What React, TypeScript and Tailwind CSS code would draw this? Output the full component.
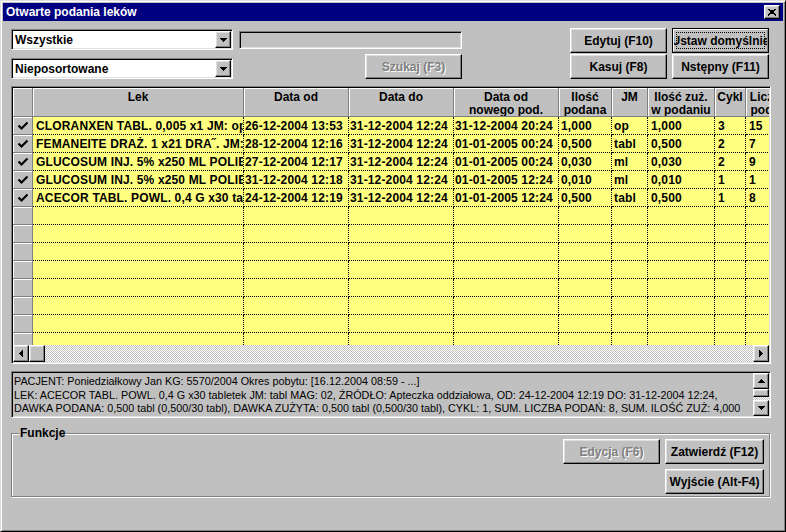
import React from "react";

const RAISED =
  "border border-t-white border-l-white border-r-black border-b-black shadow-[inset_-1px_-1px_0_#808080,inset_1px_1px_0_#dfdfdf] bg-[#c0c0c0]";
const SUNKEN =
  "border border-t-[#808080] border-l-[#808080] border-r-white border-b-white shadow-[inset_1px_1px_0_#000,inset_-1px_-1px_0_#dfdfdf]";
const CHECKER =
  "bg-[#c0c0c0] bg-[image:repeating-conic-gradient(#ffffff_0_25%,#c0c0c0_0_50%)] bg-[length:2px_2px]";

type Dir = "up" | "down" | "left" | "right";

function Arrow({ dir }: { dir: Dir }) {
  const vertical = dir === "up" || dir === "down";
  const pts =
    dir === "down"
      ? "0,0 7,0 3.5,4"
      : dir === "up"
      ? "0,4 7,4 3.5,0"
      : dir === "left"
      ? "4,0 4,7 0,3.5"
      : "0,0 0,7 4,3.5";
  return (
    <svg
      width={vertical ? 7 : 4}
      height={vertical ? 4 : 7}
      viewBox={vertical ? "0 0 7 4" : "0 0 4 7"}
      shapeRendering="crispEdges"
    >
      <polygon points={pts} fill="black" />
    </svg>
  );
}

function Button({
  label,
  className,
  disabled = false,
  isDefault = false,
}: {
  label: string;
  className: string;
  disabled?: boolean;
  isDefault?: boolean;
}) {
  const text = disabled
    ? "text-[#808080] [text-shadow:1px_1px_0_#fff]"
    : "text-black";
  if (isDefault) {
    return (
      <div className={`shrink-0 border border-black ${className}`}>
        <div className="relative h-full w-full border border-t-white border-l-white border-r-[#808080] border-b-[#808080] bg-[#c0c0c0] flex items-center justify-center overflow-hidden whitespace-nowrap">
          <span className={`text-[12px] font-bold ${text}`}>{label}</span>
          <div className="absolute inset-[2px] border border-dotted border-black pointer-events-none" />
        </div>
      </div>
    );
  }
  return (
    <div
      className={`shrink-0 ${RAISED} flex items-center justify-center overflow-hidden whitespace-nowrap ${className}`}
    >
      <span className={`text-[12px] font-bold ${text}`}>{label}</span>
    </div>
  );
}

function Combo({ value }: { value: string }) {
  return (
    <div className={`h-[21px] w-[222px] bg-white flex p-[1px] ${SUNKEN}`}>
      <div className="flex-1 flex items-center pl-[2px] text-[12px] font-bold">
        {value}
      </div>
      <div
        className={`w-[16px] h-full flex items-center justify-center ${RAISED}`}
      >
        <Arrow dir="down" />
      </div>
    </div>
  );
}

function Check() {
  return (
    <svg width="12" height="10" viewBox="0 0 12 10">
      <polyline
        points="1.5,4.5 4.5,7.5 10.5,1.5"
        fill="none"
        stroke="black"
        strokeWidth="2.2"
      />
    </svg>
  );
}

const COLS = [
  { w: "w-[211px]", pl: "pl-[3px]", h: ["Lek"] },
  { w: "w-[105px]", pl: "pl-[1px]", h: ["Data od"] },
  { w: "w-[105px]", pl: "pl-[1px]", h: ["Data do"] },
  { w: "w-[105px]", pl: "pl-[1px]", h: ["Data od", "nowego pod."] },
  { w: "w-[53px]", pl: "pl-[2px]", h: ["Ilość", "podana"] },
  { w: "w-[36px]", pl: "pl-[2px]", h: ["JM"] },
  { w: "w-[67px]", pl: "pl-[3px]", h: ["Ilość zuż.", "w podaniu"] },
  { w: "w-[31px]", pl: "pl-[3px]", h: ["Cykl"] },
  { w: "w-[46px]", pl: "pl-[3px]", h: ["Liczba", "podań"] },
];

const ROWS: string[][] = [
  ["CLORANXEN TABL. 0,005 x1 JM: op", "26-12-2004 13:53", "31-12-2004 12:24", "31-12-2004 20:24", "1,000", "op", "1,000", "3", "15"],
  ["FEMANEITE DRAŻ. 1 x21 DRA˝. JM: tabl", "28-12-2004 12:16", "31-12-2004 12:24", "01-01-2005 00:24", "0,500", "tabl", "0,500", "2", "7"],
  ["GLUCOSUM INJ. 5% x250 ML POLIETYLEN", "27-12-2004 12:17", "31-12-2004 12:24", "01-01-2005 00:24", "0,030", "ml", "0,030", "2", "9"],
  ["GLUCOSUM INJ. 5% x250 ML POLIETYLEN", "31-12-2004 12:18", "31-12-2004 12:24", "01-01-2005 12:24", "0,010", "ml", "0,010", "1", "1"],
  ["ACECOR TABL. POWL. 0,4 G x30 tabletek JM: tabl", "24-12-2004 12:19", "31-12-2004 12:24", "01-01-2005 12:24", "0,500", "tabl", "0,500", "1", "8"],
];

const EMPTY_ROWS = 8;

export default function App() {
  const allRows: (string[] | null)[] = [
    ...ROWS,
    ...Array.from({ length: EMPTY_ROWS }, () => null),
  ];
  return (
    <div className="w-[786px] h-[532px] bg-[#c0c0c0] border border-t-[#dfdfdf] border-l-[#dfdfdf] border-r-black border-b-black shadow-[inset_1px_1px_0_#fff,inset_-1px_-1px_0_#808080] p-[2px] flex flex-col overflow-hidden font-['Liberation_Sans',Arial,sans-serif] text-black select-none">
      {/* Title bar */}
      <div className="h-[18px] shrink-0 bg-[#000080] flex items-center justify-between pl-[3px] pr-[3px]">
        <span className="text-white text-[12px] font-bold leading-none">
          Otwarte podania leków
        </span>
        <div
          className={`w-[16px] h-[14px] flex items-center justify-center ${RAISED}`}
        >
          <svg width="8" height="7" viewBox="0 0 8 7" shapeRendering="crispEdges">
            <path d="M0 0 L8 7 M1 0 L8 6 M8 0 L0 7 M7 0 L0 6" stroke="black" strokeWidth="1" />
          </svg>
        </div>
      </div>

      {/* Body */}
      <div className="flex-1 flex flex-col pl-[8px] pr-[12px]">
        {/* Top controls */}
        <div className="mt-[7px] flex shrink-0">
          <div className="flex flex-col w-[222px] shrink-0">
            <div className="mt-[1px]">
              <Combo value="Wszystkie" />
            </div>
            <div className="mt-[8px]">
              <Combo value="Nieposortowane" />
            </div>
          </div>
          <div className="ml-[6px] w-[223px] shrink-0 flex flex-col items-end">
            <div className={`mt-[3px] h-[18px] w-full bg-[#c0c0c0] ${SUNKEN}`} />
            <div className="mt-[5px]">
              <Button label="Szukaj (F3)" className="w-[97px] h-[25px]" disabled />
            </div>
          </div>
          <div className="ml-auto mr-[2px] flex flex-col gap-[1px]">
            <div className="flex gap-[5px]">
              <Button label="Edytuj (F10)" className="w-[97px] h-[25px]" />
              <Button label="Ustaw domyślnie" className="w-[97px] h-[25px]" isDefault />
            </div>
            <div className="flex gap-[5px]">
              <Button label="Kasuj (F8)" className="w-[97px] h-[25px]" />
              <Button label="Nstępny (F11)" className="w-[97px] h-[25px]" />
            </div>
          </div>
        </div>

        {/* Grid */}
        <div
          className={`mt-[7px] h-[278px] w-full shrink-0 p-[1px] flex flex-col bg-[#c0c0c0] ${SUNKEN}`}
        >
          <div className="flex-1 overflow-hidden flex flex-col">
            {/* Header */}
            <div className="h-[29px] shrink-0 flex">
              <div className="w-[20px] shrink-0 h-full border-r border-b border-r-[#808080] border-b-[#808080] shadow-[inset_1px_1px_0_#fff] bg-[#c0c0c0]" />
              {COLS.map((c, i) => (
                <div
                  key={i}
                  className={`${c.w} shrink-0 h-full border-r border-b border-r-[#808080] border-b-[#808080] shadow-[inset_1px_1px_0_#fff] bg-[#c0c0c0] flex flex-col items-center pt-[3px] text-[12px] font-bold leading-[13px] whitespace-nowrap overflow-hidden`}
                >
                  {c.h.map((t, j) => (
                    <span key={j}>{t}</span>
                  ))}
                </div>
              ))}
            </div>
            {/* Rows */}
            <div className="h-[228px] shrink-0 overflow-hidden flex flex-col">
              {allRows.map((r, ri) => (
                <div key={ri} className="h-[18px] shrink-0 flex">
                  <div className="w-[20px] shrink-0 h-full border-r border-b border-r-[#808080] border-b-[#808080] shadow-[inset_1px_1px_0_#fff] bg-[#c0c0c0] flex items-center justify-center">
                    {r ? <Check /> : null}
                  </div>
                  {COLS.map((c, ci) => (
                    <div
                      key={ci}
                      className={`${c.w} ${c.pl} shrink-0 h-full bg-[#ffff80] border-r border-b border-dotted border-black overflow-hidden whitespace-nowrap flex items-center text-[12px] font-bold tracking-[0.15px]`}
                    >
                      {r ? r[ci] : ""}
                    </div>
                  ))}
                </div>
              ))}
            </div>
          </div>
          {/* Horizontal scrollbar */}
          <div className="h-[17px] shrink-0 flex">
            <div className={`w-[16px] h-full flex items-center justify-center ${RAISED}`}>
              <Arrow dir="left" />
            </div>
            <div className={`w-[16px] h-full ${RAISED}`} />
            <div className={`flex-1 h-full ${CHECKER}`} />
            <div className={`w-[16px] h-full flex items-center justify-center ${RAISED}`}>
              <Arrow dir="right" />
            </div>
          </div>
        </div>

        {/* Info text area */}
        <div
          className={`mt-[7px] h-[47px] w-full shrink-0 p-[1px] flex bg-[#c0c0c0] ${SUNKEN}`}
        >
          <div className="flex-1 pl-[1px] pt-[2px] text-[10.8px] leading-[13.5px] whitespace-nowrap overflow-hidden">
            <div>PACJENT: Poniedziałkowy Jan KG: 5570/2004 Okres pobytu: [16.12.2004 08:59 - ...]</div>
            <div>
              LEK: ACECOR TABL. POWL. 0,4 G x30 tabletek JM: tabl MAG: 02, ŹRÓDŁO: Apteczka oddziałowa, OD: 24-12-2004 12:19 DO: 31-12-2004 12:24,
            </div>
            <div>
              DAWKA PODANA: 0,500 tabl (0,500/30 tabl), DAWKA ZUŻYTA: 0,500 tabl (0,500/30 tabl), CYKL: 1, SUM. LICZBA PODAŃ: 8, SUM. ILOŚĆ ZUŻ: 4,000
            </div>
          </div>
          <div className="w-[16px] shrink-0 flex flex-col">
            <div className={`h-[16px] shrink-0 flex items-center justify-center ${RAISED}`}>
              <Arrow dir="up" />
            </div>
            <div className={`h-[8px] shrink-0 ${RAISED}`} />
            <div className={`flex-1 ${CHECKER}`} />
            <div className={`h-[16px] shrink-0 flex items-center justify-center ${RAISED}`}>
              <Arrow dir="down" />
            </div>
          </div>
        </div>

        {/* Funkcje group */}
        <div className="relative mt-[15px] h-[64px] w-[759px] shrink-0 border border-[#808080] shadow-[1px_1px_0_#fff,inset_1px_1px_0_#fff] flex flex-col items-end pt-[5px] pr-[5px] gap-[5px]">
          <span className="absolute left-[7px] -top-[8px] bg-[#c0c0c0] px-[1px] text-[12px] font-bold leading-[14px]">
            Funkcje
          </span>
          <div className="flex gap-[5px]">
            <Button label="Edycja (F6)" className="w-[97px] h-[25px]" disabled />
            <Button label="Zatwierdź (F12)" className="w-[99px] h-[25px]" />
          </div>
          <Button label="Wyjście (Alt-F4)" className="w-[99px] h-[25px]" />
        </div>
      </div>
    </div>
  );
}
